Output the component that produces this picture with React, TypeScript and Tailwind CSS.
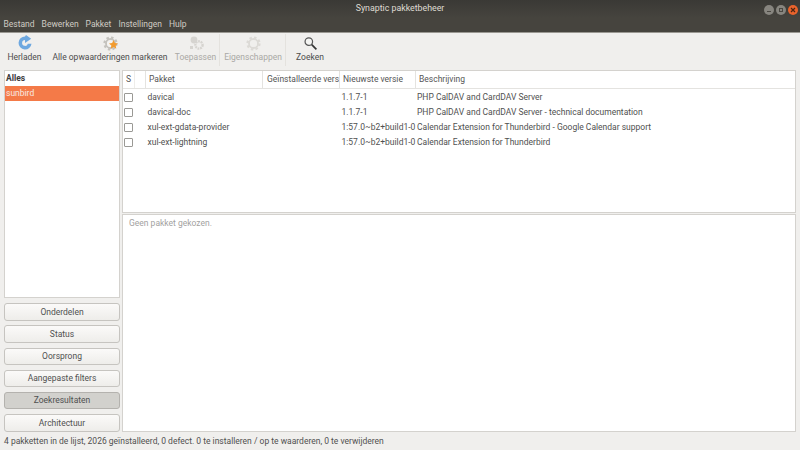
import React from "react";

const Gear = ({ color = "#c4c2be", inner = "#f0efed" }: { color?: string; inner?: string }) => (
  <svg width="15" height="15" viewBox="0 0 16 16">
    <circle cx="8" cy="8" r="6.4" fill="none" stroke={color} strokeWidth="2.4" strokeDasharray="2.6 2.4" />
    <circle cx="8" cy="8" r="4.8" fill="none" stroke={color} strokeWidth="2" />
    <circle cx="8" cy="8" r="3.6" fill={inner} />
  </svg>
);

const ToolBtn = ({ label, icon, disabled, className }: { label: string; icon: React.ReactNode; disabled?: boolean; className?: string }) => (
  <div className={`flex flex-col items-center ${className ?? ""}`}>
    <div className="h-[16px] w-[16px] mt-[2px] mb-[-1px] flex items-center justify-center">{icon}</div>
    <span className={`leading-[14px] whitespace-nowrap ${disabled ? "text-[#aaa9a5]" : "text-[#4c4c4c]"}`}>{label}</span>
  </div>
);

const Sep = () => <div className="w-px h-[32px] mt-[1px] bg-[#e4e2de]" />;

const rows = [
  ["davical", "1.1.7-1", "PHP CalDAV and CardDAV Server"],
  ["davical-doc", "1.1.7-1", "PHP CalDAV and CardDAV Server - technical documentation"],
  ["xul-ext-gdata-provider", "1:57.0~b2+build1-0", "Calendar Extension for Thunderbird - Google Calendar support"],
  ["xul-ext-lightning", "1:57.0~b2+build1-0", "Calendar Extension for Thunderbird"],
];

const filters = ["Onderdelen", "Status", "Oorsprong", "Aangepaste filters", "Zoekresultaten", "Architectuur"];

const Dot = ({ className, children }: { className: string; children?: React.ReactNode }) => (
  <div className={`w-[10px] h-[10px] rounded-full flex items-center justify-center ${className}`}>{children}</div>
);

export default function App() {
  return (
    <div className="w-[800px] h-[450px] flex flex-col overflow-hidden bg-[#f0efed] text-[8.5px] text-[#505050] font-['Roboto',sans-serif]">
      <div className="h-[18px] bg-gradient-to-b from-[#3a3935] to-[#46443e] flex items-center">
        <div className="w-[36px]" />
        <span className="flex-1 text-center text-[8.8px] text-[#dfdbd2]">Synaptic pakketbeheer</span>
        <div className="w-[36px] flex gap-[2px] pt-[1px] items-center">
          <Dot className="bg-[#87857f]"><div className="w-[4px] h-[1px] bg-[#4a4842] mt-[3px]" /></Dot>
          <Dot className="bg-[#87857f]"><div className="w-[4px] h-[4px] border border-[#4a4842]" /></Dot>
          <Dot className="bg-[#e9632c]">
            <svg width="6" height="6" viewBox="0 0 6 6"><path d="M1 1l4 4M5 1L1 5" stroke="#4a2412" strokeWidth="1.2" /></svg>
          </Dot>
        </div>
      </div>
      <div className="h-[14px] bg-[#46443e] flex items-start pl-[3.5px] gap-[7px] text-[#cfcbc3] leading-[13px]">
        <span>Bestand</span><span>Bewerken</span><span>Pakket</span><span>Instellingen</span><span>Hulp</span>
      </div>
      <div className="h-px bg-[#9a9892]" />
      <div className="h-[37px] flex items-start shrink-0 pl-[7px]">
        <ToolBtn label="Herladen" className="w-[35px]" icon={
          <svg width="16" height="16" viewBox="0 0 16 16">
            <path d="M8 1.5a6.5 6.5 0 1 0 6.5 7.2h-3.7A2.9 2.9 0 1 1 8 5.1V8l6.2-4.2L9 0z" fill="#6ea8e0" />
          </svg>
        } />
        <ToolBtn label="Alle opwaarderingen markeren" className="ml-[11px] w-[114px]" icon={
          <div className="relative w-[15px] h-[15px]">
            <Gear color="#c4c2bd" inner="#f4f3f1" />
            <svg className="absolute left-[6px] top-[4px]" width="9" height="9" viewBox="0 0 10 10">
              <path d="M5 0l1.5 3.2L10 3.8 7.4 6.1 8.1 9.6 5 7.8 1.9 9.6l.7-3.5L0 3.8l3.5-.6z" fill="#f29b2e" />
            </svg>
          </div>
        } />
        <ToolBtn label="Toepassen" disabled className="ml-[8px] w-[41px]" icon={
          <svg width="16" height="16" viewBox="0 0 16 16">
            <circle cx="6" cy="5" r="3.4" fill="#d6d4d0" />
            <circle cx="11" cy="10" r="3.6" fill="none" stroke="#d6d4d0" strokeWidth="2.4" strokeDasharray="1.8 .8" />
            <rect x="2" y="11" width="3" height="3" fill="#d6d4d0" />
          </svg>
        } />
        <div className="ml-[3px]"><Sep /></div>
        <ToolBtn label="Eigenschappen" disabled className="ml-[5px] w-[56px]" icon={<Gear color="#dcdad6" />} />
        <div className="ml-[4px]"><Sep /></div>
        <ToolBtn label="Zoeken" className="ml-[10px] w-[28px]" icon={
          <svg width="15" height="15" viewBox="0 0 16 16">
            <circle cx="6.2" cy="6" r="4" fill="#f4f4f2" stroke="#555" strokeWidth="1.3" />
            <path d="M9.3 9.2l5 5" stroke="#333" strokeWidth="1.8" />
          </svg>
        } />
      </div>

      <div className="flex flex-1 min-h-0">
        <div className="w-[122px] shrink-0 pl-[4px] pr-[2px] flex flex-col">
          <div className="h-[228px] bg-white border border-[#d4d2ce]">
            <div className="h-[15px] leading-[14px] pl-[1px] font-bold text-[#3c3c3c]">Alles</div>
            <div className="h-[15px] leading-[14px] pl-[1px] bg-[#f47a48] text-[#f8e9e1]">sunbird</div>
          </div>
          <div className="flex flex-col gap-[4.8px] mt-[5.3px]">
            {filters.map((f) => (
              <div
                key={f}
                className={`h-[17.4px] rounded-[3px] border flex items-center justify-center ${
                  f === "Zoekresultaten" ? "bg-[#d2d1cd] border-[#b4b2ae]" : "bg-gradient-to-b from-[#fbfaf9] to-[#eeedea] border-[#c6c4c0]"
                }`}
              >
                {f}
              </div>
            ))}
          </div>
        </div>
        <div className="flex-1 min-w-0 flex flex-col pr-[4px]">
          <div className="h-[143px] bg-white border border-[#d4d2ce] overflow-hidden shrink-0">
            <div className="h-[18px] flex items-center border-b border-[#e4e3e0] text-[#555]">
              <div className="w-[12px] pl-[3px] h-full leading-[16px] border-r border-[#eeedea] shrink-0">S</div>
              <div className="w-[11px] h-full border-r border-[#e4e3e0] shrink-0" />
              <div className="w-[117px] pl-[3px] h-full leading-[16px] border-r border-[#e4e3e0] shrink-0">Pakket</div>
              <div className="w-[77px] pl-[4px] h-full leading-[16px] border-r border-[#e4e3e0] whitespace-nowrap overflow-hidden shrink-0">Geïnstalleerde vers</div>
              <div className="w-[76px] pl-[3px] h-full leading-[16px] border-r border-[#e4e3e0] whitespace-nowrap shrink-0">Nieuwste versie</div>
              <div className="pl-[3px] h-full leading-[16px]">Beschrijving</div>
            </div>
            <div className="pt-[0.5px]">
              {rows.map((r) => (
                <div key={r[0]} className="h-[15.2px] flex items-center whitespace-nowrap">
                  <div className="w-[23px] pl-[1px] shrink-0">
                    <div className="w-[9px] h-[9px] rounded-[1px] border border-[#9a9995] bg-white" />
                  </div>
                  <div className="w-[195px] pl-[1.5px] shrink-0">{r[0]}</div>
                  <div className="w-[76px] pl-[0.5px] shrink-0">{r[1]}</div>
                  <div>{r[2]}</div>
                </div>
              ))}
            </div>
          </div>
          <div className="h-[1px] shrink-0" />
          <div className="flex-1 bg-white border border-[#d4d2ce] pl-[6px] pt-[1px] text-[#a3a29f] leading-[14px]">Geen pakket gekozen.</div>
        </div>
      </div>
      <div className="h-[18px] shrink-0 pl-[4px] leading-[19px]">
        4 pakketten in de lijst, 2026 geïnstalleerd, 0 defect. 0 te installeren / op te waarderen, 0 te verwijderen
      </div>
    </div>
  );
}
